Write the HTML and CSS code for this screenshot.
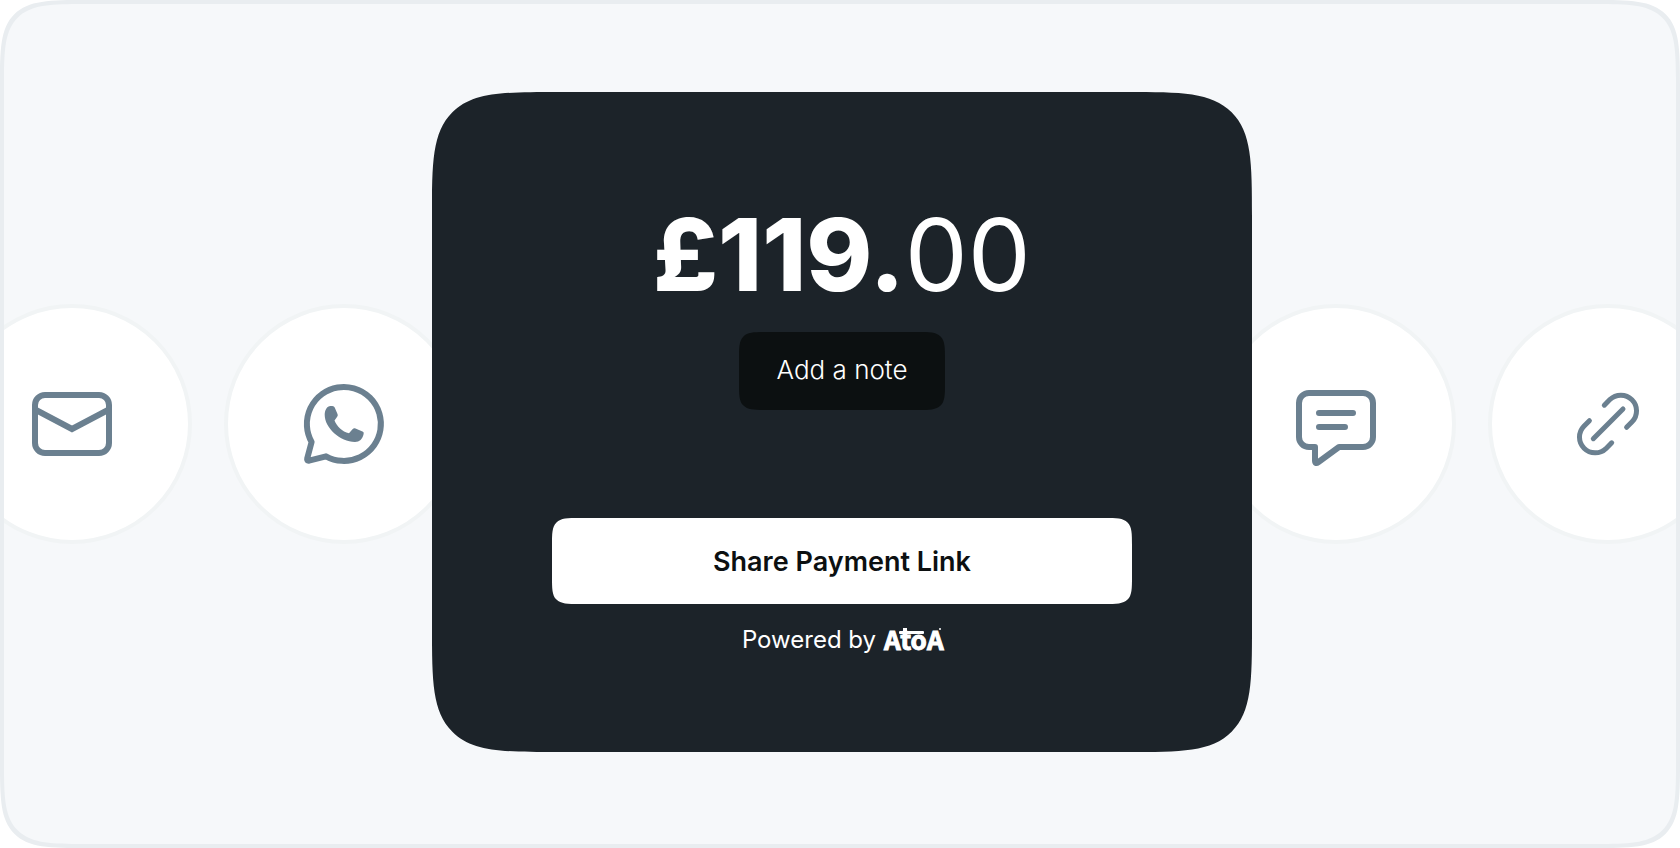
FILE: index.html
```html
<!DOCTYPE html>
<html lang="en">
<head>
  <meta charset="UTF-8" />
  <meta name="viewport" content="width=device-width, initial-scale=1" />
  <title>Share Payment Link</title>
  <link rel="stylesheet" href="styles.css">
</head>
<body>
  <main class="frame">
    <div class="channels">
      <div class="channel-group">
        <button class="channel" type="button" aria-label="Email">
          <svg class="icon" viewBox="0 0 80 80">
            <rect x="3" y="11" width="74" height="58" rx="10" />
            <path d="M4 26L40 45L76 26" />
          </svg>
        </button>
        <button class="channel" type="button" aria-label="WhatsApp">
          <svg class="icon" viewBox="0 0 80 80">
            <path d="M7.6 58A37 37 0 1 1 22 72.3L5 76.7Q2.6 77 3.2 74.6Z" />
            <path class="solid" d="M20.7 31C20.7 26 23 22 26.5 22C29 22 30 22 30.7 23.5L33.5 30C34 31.5 33.7 32 33 33L30.5 36.5C33 42.5 38 47.5 45 49.3L48.5 45.2C49.5 44 50.5 44 51.5 44.4L58.5 47.5C60 48.2 59.8 49 59.5 50.5C58.5 55 55.5 58 51 58C36 58 20.7 43.5 20.7 31Z" />
          </svg>
        </button>
      </div>
      <div class="channel-group">
        <button class="channel" type="button" aria-label="Text message">
          <svg class="icon" viewBox="0 0 80 80">
            <path d="M19 63H13A10 10 0 0 1 3 53V19A10 10 0 0 1 13 9H67A10 10 0 0 1 77 19V53A10 10 0 0 1 67 63H43L22.5 78Q19 80.5 19 76.5Z" />
            <path d="M23 29H57M23 43H49" />
          </svg>
        </button>
        <button class="channel" type="button" aria-label="Copy link">
          <svg class="icon icon-link" viewBox="0 0 80 80">
            <path d="M36.3 21.2L41.9 15.6A15.7 15.7 0 0 1 64.1 37.8L58.6 43.3" />
            <path d="M43.7 58.8L38.1 64.4A15.7 15.7 0 0 1 15.9 42.2L21.4 36.7" />
            <path d="M25.3 54.7L55 25" />
          </svg>
        </button>
      </div>
    </div>

    <section class="card">
      <h1 class="amount">£119.<span class="pence">00</span></h1>
      <button class="note" type="button">Add a note</button>
      <button class="share" type="button">Share Payment Link</button>
      <p class="powered">
        Powered by
        <svg class="logo" viewBox="0 0 58 24" role="img" aria-label="Atoa">
          <text x="0" y="22">AtoA</text>
          <rect x="15" y="3" width="25" height="3" rx="1" />
          <rect x="19" y="0" width="4" height="10" />
          <circle cx="56" cy="1" r="1" />
        </svg>
      </p>
    </section>
  </main>
</body>
</html>
```
FILE: styles.css
```css
* { box-sizing: border-box; }
body { margin: 0; background: #fff; font-family: Inter, "Liberation Sans", sans-serif; }
button { border: none; padding: 0; font-family: inherit; cursor: pointer; }

.frame { display: grid; align-items: center; min-height: 100vh; border: 4px solid #e9edf0; border-radius: 48px; background: #f6f8fa; overflow: hidden; }

/* share channels, running out past both sides of the frame */
.channels { grid-area: 1 / 1; display: flex; justify-content: space-between; margin: 0 -52px; }
.channel-group { display: flex; gap: 32px; }
.channel { display: flex; align-items: center; justify-content: center; width: 240px; height: 240px; border: 4px solid #f1f4f5; border-radius: 50%; background: #fff; }
.icon { width: 80px; height: 80px; overflow: visible; fill: none; stroke: #6b8090; stroke-width: 6; stroke-linecap: round; stroke-linejoin: round; }
.icon-link { stroke-width: 5; }
.icon rect + path { stroke-linejoin: miter; }
.icon .solid { fill: #6b8090; stroke: none; }

.card { grid-area: 1 / 1; justify-self: center; position: relative; display: flex; flex-direction: column; align-items: center; width: 100%; max-width: 820px; margin: 0 0 4px 4px; padding: 103px 120px 96px; border-radius: 64px; background: #1c2329; color: #fff; }
.amount { margin: 0; font-size: 100px; line-height: 120px; font-weight: 800; }
.pence { font-weight: 400; }
.note { margin-top: 17px; padding: 0 38px 4px; height: 78px; border-radius: 16px; background: #0c1011; color: #fff; font-size: 26px; font-weight: 300; }
.share { align-self: stretch; margin-top: 108px; height: 86px; border-radius: 16px; background: #fff; color: #0c1011; font-size: 27px; font-weight: 600; }
.powered { display: flex; align-items: center; gap: 8px; margin: 20px 0 0; font-size: 24px; line-height: 32px; font-weight: 400; }
.logo { width: 58px; height: 24px; overflow: visible; fill: #fff; }
.logo text { font: bold 26px "Noto Sans CJK JP", sans-serif; stroke: #fff; stroke-width: 1; }

/* smoother corners where the browser can draw them */
@supports (corner-shape: squircle) {
  .frame { border-radius: 90px; corner-shape: squircle; }
  .card { border-radius: 128px; corner-shape: squircle; }
  .note, .share { border-radius: 28px; corner-shape: squircle; }
}
```
